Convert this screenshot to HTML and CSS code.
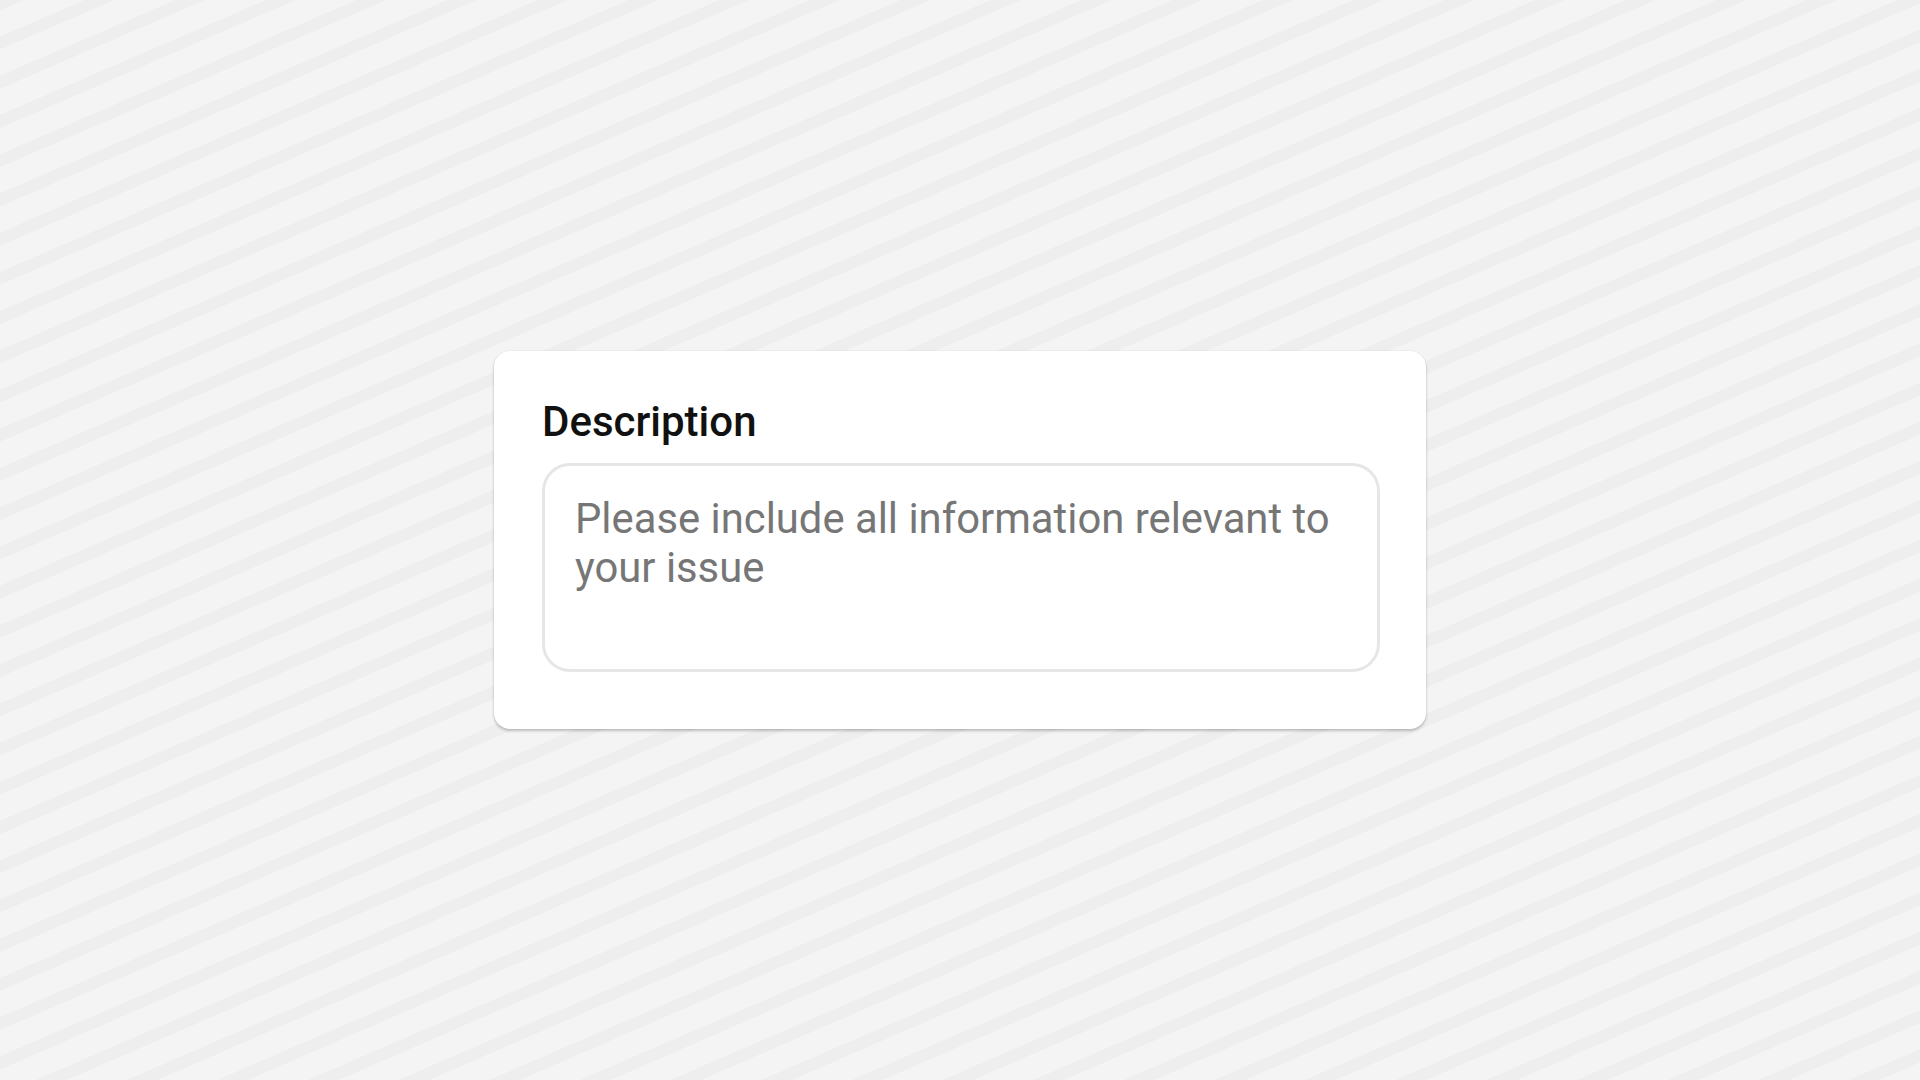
FILE: index.html
```html
<!DOCTYPE html>
<html lang="en">
<head>
<meta charset="utf-8">
<title>Description</title>
<link rel="stylesheet" href="styles.css">
</head>
<body>
<main class="page">
  <section class="card">
    <label class="label" for="desc">Description</label>
    <div class="textarea" id="desc" role="textbox" aria-multiline="true">
      <span class="placeholder">Please include all information relevant to your issue</span>
    </div>
  </section>
</main>
</body>
</html>
```
FILE: styles.css
```css
html, body {
  margin: 0;
  padding: 0;
}
body {
  font-family: Roboto, "Noto Sans", "Liberation Sans", sans-serif;
  background-color: #f4f4f4;
  background-image: repeating-linear-gradient(156.6deg, #eeeeee 0 9.5px, #f4f4f4 9.5px 33.5px, #eeeeee 33.5px 36px);
}
.page {
  width: 1920px;
  height: 1080px;
  display: flex;
  align-items: center;
  justify-content: center;
}
.card {
  box-sizing: border-box;
  width: 932px;
  height: 378px;
  background: #ffffff;
  border-radius: 16px;
  padding: 47px 46px 57px 48px;
  display: flex;
  flex-direction: column;
  box-shadow: 0 2px 3px rgba(0, 0, 0, 0.22), 0 0 2px rgba(0, 0, 0, 0.08);
}
.label {
  display: block;
  font-size: 42px;
  font-weight: 500;
  line-height: 48px;
  color: #111111;
  margin-bottom: 17px;
}
.textarea {
  box-sizing: border-box;
  height: 209px;
  border: 3px solid #e6e6e6;
  border-radius: 28px;
  padding: 29px 30px 27px;
  font-size: 41.8px;
  line-height: 48.5px;
}
.placeholder {
  color: #767676;
}
```
